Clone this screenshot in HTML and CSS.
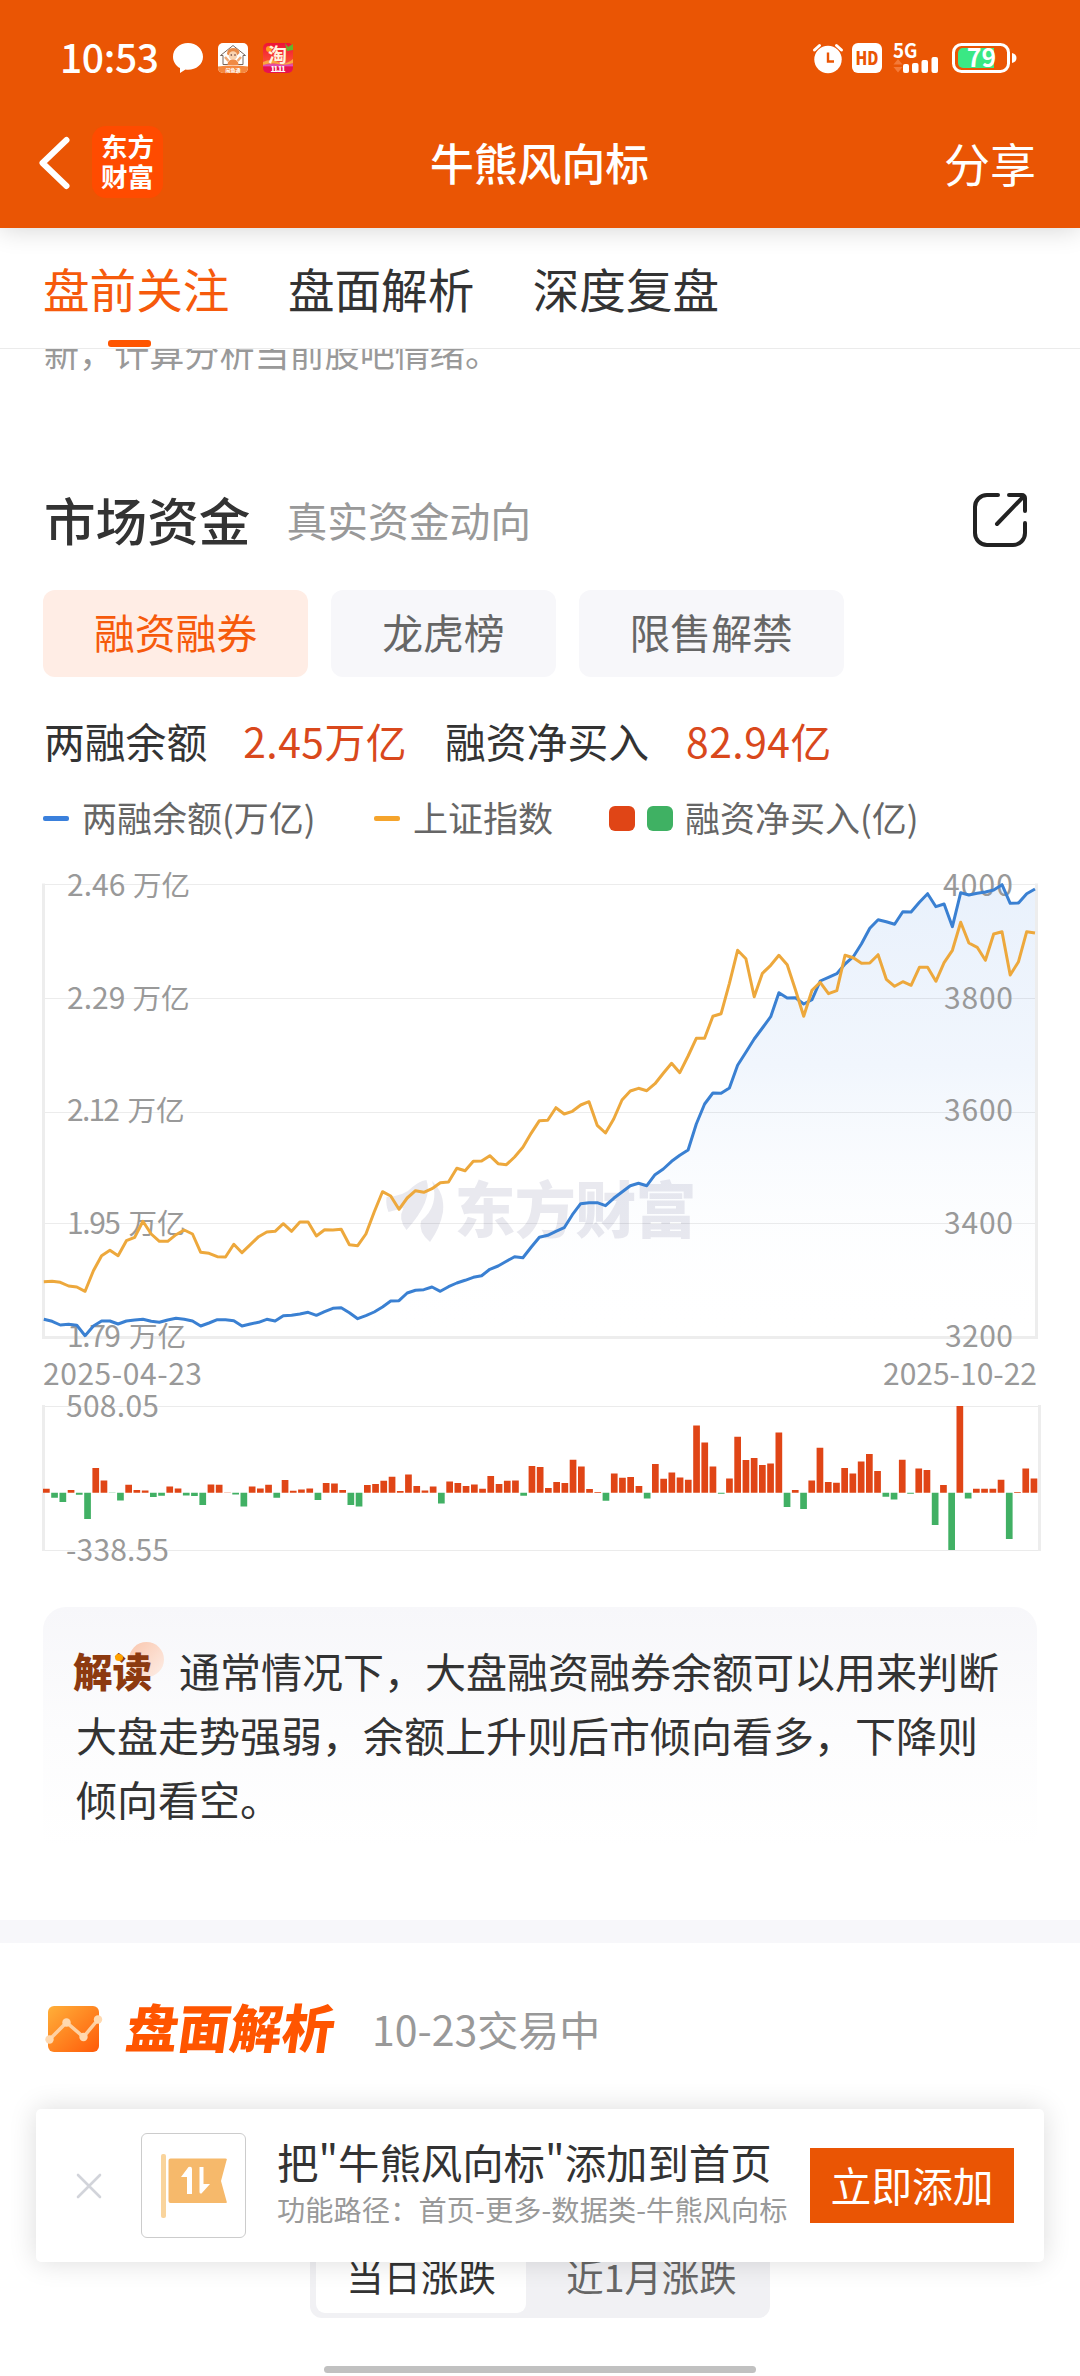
FILE: index.html
```html
<!DOCTYPE html>
<html lang="zh-CN">
<head>
<meta charset="utf-8">
<title>牛熊风向标</title>
<link rel="stylesheet" href="styles.css">
</head>
<body>
<div class="screen">
  <header class="top">
    <div class="status">
      <span class="time">10:53</span>
      <svg class="s-chat" width="30" height="30" viewBox="0 0 30 30"><path d="M15 0C6.700 0 0 6 0 13.700c0 4.800 2.700 9 7 11.400V30l5.500-3.400c.8.100 1.700.2 2.500.2 8.300 0 15-5.600 15-13.100S23.300 0 15 0z" fill="#fff"/></svg>
      <svg class="s-app" width="30" height="30" viewBox="0 0 30 30">
        <rect width="30" height="30" rx="5" fill="#fff"/>
        <path d="M0 23.500q15-2 30 0V25a5 5 0 0 1-5 5H5a5 5 0 0 1-5-5z" fill="#f5873d"/>
        <path d="M2.500 12.500 15 2.500l12.500 10H25v9H5v-9z" fill="none" stroke="#77665c" stroke-width="1"/>
        <path d="M9 11q0-6 6-6t6.500 5l-2 2H10z" fill="#e88a48"/>
        <circle cx="15" cy="12.500" r="4.300" fill="#f9d3b0"/>
        <circle cx="13.300" cy="12" r=".8" fill="#533"/><circle cx="17" cy="12" r=".8" fill="#533"/>
        <path d="M9.500 22q0-5.500 5.500-5.500t5.500 5.500z" fill="#f08a45"/><path d="M7 14l3.500 4M23 14l-3.500 4" stroke="#f0a873" stroke-width="2.500"/>
        <text x="15" y="28.800" text-anchor="middle" font-size="5" font-weight="700" fill="#fff">闲鱼通</text>
      </svg>
      <svg class="s-app" width="30" height="30" viewBox="0 0 30 30">
        <defs><linearGradient id="tb" x1="0" y1="0" x2="0" y2="1"><stop offset="0" stop-color="#ee1238"/><stop offset=".6" stop-color="#fb4a32"/><stop offset=".75" stop-color="#e04fb4"/><stop offset=".8" stop-color="#e8124e"/></linearGradient></defs>
        <rect width="30" height="30" rx="5" fill="url(#tb)"/>
        <path d="M22 0l3 4 5-3v6l-6 1z" fill="#63b52c"/>
        <circle cx="6" cy="6" r="3" fill="#ff9a1f"/>
        <path d="M0 19q8-4 15 0t15-3v4q-8 3-15 1T0 22z" fill="#f9a640"/>
        <text x="14.500" y="18.500" text-anchor="middle" font-size="19" font-weight="700" fill="#fff4df">淘</text>
        <text x="15" y="29" text-anchor="middle" font-size="7.500" font-weight="900" fill="#fff" textLength="15">11.11</text>
      </svg>
      <svg class="s-right" width="204" height="30" viewBox="0 0 204 30">
        <g fill="#fff">
          <circle cx="15" cy="16.500" r="13.700"/>
          <path d="M1.500 7l5-4.500M28.500 7l-5-4.500" stroke="#fff" stroke-width="3" stroke-linecap="round"/>
          <path d="M15 9.500v9h6" fill="none" stroke="#ea5504" stroke-width="2.400"/>
          <rect x="39" y="0" width="30" height="30" rx="6"/>
          <text x="54" y="21.500" text-anchor="middle" font-size="18" font-weight="900" fill="#ea5504" textLength="23" lengthAdjust="spacingAndGlyphs">HD</text>
          <text x="80" y="15" font-size="20" font-weight="700" textLength="24.500" lengthAdjust="spacingAndGlyphs">5G</text>
          <rect x="90" y="21" width="6" height="9" rx="2"/><rect x="99" y="20" width="6.500" height="10" rx="2"/><rect x="108.500" y="17" width="6.500" height="13" rx="2"/><rect x="118.500" y="14" width="6.500" height="16" rx="2"/>
          <path d="M80.500 21.500l4.500-5.500 4.500 5.500zM80.500 24l4.500 5.500 4.500-5.500z" fill="#f47a38"/>
        </g>
        <rect x="140.500" y="1.500" width="55" height="27" rx="8" fill="none" stroke="#fff" stroke-width="3"/>
        <path d="M150 5h31v20h-31a5 5 0 0 1-5-5v-10a5 5 0 0 1 5-5z" fill="#3ae884"/>
        <text x="168.500" y="24" text-anchor="middle" font-size="25" font-weight="700" fill="#fff">79</text>
        <path d="M199 10q4.500 1 4.500 5t-4.500 5z" fill="#fff"/>
      </svg>
    </div>
    <nav class="nav">
      <svg width="32" height="54" viewBox="0 0 32 54"><path d="M28.500 4 4.500 27l24 23" fill="none" stroke="#fff" stroke-width="6" stroke-linecap="round" stroke-linejoin="round"/></svg>
      <div class="logo"><span>东方</span><span>财富</span></div>
      <h1>牛熊风向标</h1>
      <span class="share">分享</span>
    </nav>
  </header>
  <div class="tabs">
    <span class="tab on">盘前关注</span><span class="tab">盘面解析</span><span class="tab">深度复盘</span>
  </div>
  <div class="peek"><p>新，计算分析当前股吧情绪。</p></div>

  <section class="funds">
    <div class="head">
      <h2>市场资金</h2><span class="sub">真实资金动向</span>
      <svg class="open" width="56" height="56" viewBox="0 0 56 56"><g fill="none" stroke="#222" stroke-width="4" stroke-linecap="round" stroke-linejoin="round"><path d="M26 3H15A12 12 0 0 0 3 15v26a12 12 0 0 0 12 12h26a12 12 0 0 0 12-12V31"/><path d="M25 32 51 5M37 3h13a3 3 0 0 1 3 3v13"/></g></svg>
    </div>
    <div class="chips"><span class="chip on">融资融券</span><span class="chip">龙虎榜</span><span class="chip">限售解禁</span></div>
    <div class="stats"><span>两融余额</span><b class="v1">2.45万亿</b><span class="l2">融资净买入</span><b class="v2">82.94亿</b></div>
    <div class="legend">
      <i class="dash blue"></i><span class="g1">两融余额(万亿)</span>
      <i class="dash amber"></i><span class="g2">上证指数</span>
      <i class="sq red"></i><i class="sq green"></i><span>融资净买入(亿)</span>
    </div>
    <svg class="chart" width="1080" height="710" viewBox="0 868 1080 710">
      <defs><linearGradient id="area" gradientUnits="userSpaceOnUse" x1="0" y1="884" x2="0" y2="1337"><stop offset="0" stop-color="#e9f1fc"/><stop offset=".4" stop-color="#f1f6fd"/><stop offset="1" stop-color="#fff" stop-opacity="0"/></linearGradient></defs>
      <path id="areaPath" fill="url(#area)"/>
      <g fill="#33336b" fill-opacity=".11">
        <path d="M386.500 1197q18-1 26-10 7-6 14-7 7 20-20 50-9-11-3-22l-15 4q-3-7-2-15z"/>
        <path d="M432 1181q13 12 11 31-3 16-13 30-12-10-9-21 19-16 11-40z"/>
        <text x="575.500" y="1233" text-anchor="middle" font-size="61" font-weight="900" textLength="242">东方财富</text>
      </g>
      <g stroke="#000" stroke-opacity=".075"><path d="M45 884.500H1035M45 998.500H1035M45 1112.500H1035M45 1223.500H1035"/></g>
      <path d="M43.500 883.500V1337.500H1036.500V883.500" fill="none" stroke="#ededed" stroke-width="3"/>
      <g class="axis">
        <text x="67" y="896">2.46<tspan class="unit" x="133">万亿</tspan></text>
        <text x="67" y="1009">2.29<tspan class="unit" x="132.500">万亿</tspan></text>
        <text x="67" y="1121"><tspan textLength="53">2.12</tspan><tspan class="unit" x="127.500">万亿</tspan></text>
        <text x="67" y="1234"><tspan textLength="54">1.95</tspan><tspan class="unit" x="128.500">万亿</tspan></text>
        <text x="67" y="1347"><tspan textLength="54">1.79</tspan><tspan class="unit" x="129">万亿</tspan></text>
        <g text-anchor="end"><text x="1013" y="896" textLength="70">4000</text><text x="1013" y="1009" textLength="69">3800</text><text x="1013" y="1121" textLength="69">3600</text><text x="1013" y="1234" textLength="69">3400</text><text x="1013" y="1347" textLength="68">3200</text></g>
        <text x="43" y="1385" textLength="159">2025-04-23</text>
        <text x="1037" y="1385" text-anchor="end" textLength="154">2025-10-22</text>
      </g>
      <path id="bluePath" class="line" stroke="#3a80d2"/>
      <path id="amberPath" class="line" stroke="#eda83c"/>
      <path d="M45 1406.500H1038M45 1550.500H1038" stroke="#ebebeb"/>
      <path d="M43.500 1405V1551M1039.500 1405V1551" stroke="#ededed" stroke-width="3"/>
      <g class="axis"><text x="66" y="1417" textLength="93">508.05</text><text x="66" y="1561" textLength="103">-338.55</text></g>
      <path id="upBars" fill="#e04516"/><path id="downBars" fill="#41b064"/>
    </svg>
    <div class="note">
      <p><span class="badge"><span>解读</span><i></i></span>通常情况下，大盘融资融券余额可以用来判断<br>大盘走势强弱，余额上升则后市倾向看多，下降则<br>倾向看空。</p>
    </div>
  </section>
  <section class="analysis">
    <div class="a-head">
      <svg width="58" height="46" viewBox="0 0 58 46"><defs><linearGradient id="ic" x1="0" y1="0" x2="1" y2="1"><stop offset="0" stop-color="#ffb03a"/><stop offset="1" stop-color="#ff5a08"/></linearGradient></defs><rect x="3" width="51" height="46" rx="6" fill="url(#ic)"/><g fill="#ffd9b0"><path d="M4.500 33.500 21.500 16.500 38.500 31 53 13.500" fill="none" stroke="#ffd0a0" stroke-width="3.500"/><circle cx="4.500" cy="33.500" r="4.200"/><circle cx="21.500" cy="16.500" r="4.200"/><circle cx="38.500" cy="31" r="4.200"/><circle cx="53" cy="13.500" r="4.200"/></g></svg>
      <h2>盘面解析</h2><span>10-23交易中</span>
    </div>
    <div class="seg"><span class="on">当日涨跌</span><span>近1月涨跌</span></div>
  </section>

  <aside class="toast">
    <svg class="x" width="26" height="26" viewBox="0 0 26 26"><path d="M2 2l22 22M24 2 2 24" stroke="#d2d4da" stroke-width="2.600" stroke-linecap="round"/></svg>
    <div class="pic"><svg width="68" height="66" viewBox="0 0 68 66"><rect x="1" y="1" width="5" height="64" rx="2" fill="#f9d49c"/><path d="M10.500 5.500h55q2 0 1 2L61 28l5.500 20q1 2-1 2h-55q-2 0-2-2v-40.500q0-2 2-2z" fill="#f6b96b"/><path d="M21 24l7.500-10q3.500-1 3.500 2v25h-5V24zM39.500 14h4v17h6.500l-8.500 9.500q-2 .5-2-1.500z" fill="#fff"/></svg></div>
    <div class="msg"><strong>把"牛熊风向标"添加到首页</strong><small>功能路径：首页-更多-数据类-牛熊风向标</small></div>
    <span class="btn">立即添加</span>
  </aside>
  <div class="home"></div>
</div>
<script src="chart.js"></script>
</body>
</html>
```
FILE: styles.css
```css
* { box-sizing: border-box; margin: 0; padding: 0; }
body { width: 1080px; background: #fff; color: #333; font-family: "Noto Sans CJK SC", sans-serif; font-size: 40.8px; }
h1, h2, strong, b { font-weight: 500; }
.screen { position: relative; width: 1080px; height: 2376px; overflow: hidden; display: flex; flex-direction: column; }
svg { display: block; flex: none; overflow: visible; }
span { white-space: nowrap; }

.top { height: 228px; flex: none; background: #ea5504; color: #fff; position: relative; z-index: 2; box-shadow: 0 2px 24px rgba(0, 0, 0, .16); }
.status { height: 100px; padding: 16px 63px 0 60px; display: flex; align-items: center; }
.time { font-size: 39px; font-weight: 500; line-height: 80px; width: 113px; margin-top: -5px; letter-spacing: -.4px; }
.s-chat { margin-right: 15px; }
.s-app { margin-right: 15px; }
.s-right { margin-left: auto; }
.nav { height: 124px; padding: 0 44px 0 38px; display: flex; align-items: center; }
.nav > svg { margin-top: 2px; }
.logo { width: 71px; height: 72px; margin-left: 22px; border-radius: 14px; background: #ff4b00; display: flex; flex-direction: column; justify-content: center; align-items: center; font-size: 26.5px; font-weight: 700; line-height: 30px; padding-bottom: 3px; }
.nav h1 { flex: 1; text-align: center; padding-right: 28px; font-size: 43.8px; line-height: 60px; margin-top: -1px; }
.share { font-size: 46px; line-height: 60px; margin-top: -1px; }

.tabs { height: 121px; flex: none; display: flex; gap: 58.500px; padding: 0 43px; background: #fff; border-bottom: 1px solid #ebebeb; position: relative; z-index: 1; }
.tab { font-size: 46.6px; line-height: 120px; display: flex; flex-direction: column; align-items: center; }
.tab.on { color: #f65a0c; }
.tab.on::after { content: ""; width: 43px; height: 7px; border-radius: 3px; background: #ff5500; margin-top: -8px; margin-right: 13px; }
.peek { height: 101px; flex: none; overflow: hidden; padding-left: 44px; color: #999; }
.peek p { font-size: 35.1px; line-height: 40px; margin-top: -17px; }

.funds { height: 1470px; flex: none; }
.head { height: 140px; padding: 0 52px 0 44px; display: flex; align-items: center; }
.head h2 { font-size: 51.6px; line-height: 80px; margin-top: -3px; }
.sub { margin-left: 36px; color: #999; margin-top: -1px; }
.open { margin-left: auto; }
.chips { display: flex; gap: 23px; padding: 0 43px; }
.chip { height: 87px; line-height: 84px; padding: 0 51px; border-radius: 12px; background: #f7f7fa; color: #666; }
.chip.on { background: #ffede5; color: #f65a0c; }
.stats { display: flex; padding: 0 44px; height: 132px; line-height: 128px; }
.stats b { font-weight: 400; color: #d9481c; letter-spacing: .5px; }
.v1 { margin-left: 36px; }
.l2 { margin-left: 38px; }
.v2 { margin-left: 37px; }
.legend { display: flex; align-items: center; height: 59px; margin-top: -20px; padding: 0 43px; font-size: 35px; color: #666; margin-bottom: 20px; }
.legend span { line-height: 50px; margin-top: -3px; }
.dash { width: 26px; height: 5px; border-radius: 2px; }
.dash.blue { background: #3a80dc; margin-right: 13px; }
.dash.amber { background: #f5a42c; margin-right: 13px; }
.g1 { width: 292px; }
.g2 { width: 196px; }
.sq { width: 26px; height: 25px; border-radius: 6px; margin-right: 12px; }
.sq.red { background: #e04516; }
.sq.green { background: #3fb163; }
.axis { font-size: 30px; fill: #999; }
.unit { font-size: 28.600px; }
.line { fill: none; stroke-width: 3; stroke-linejoin: round; }
.note { margin: 29px 43px 0; height: 250px; border-radius: 23px; padding: 31px 33px 0; background: linear-gradient(#f7f7fa, #fcfcfd 50%, #fff 96%); }
.note p { font-size: 41px; line-height: 64px; white-space: nowrap; }
.badge { position: relative; display: inline-block; width: 103px; height: 64px; vertical-align: top; color: #8d3a10; font-size: 39.6px; font-weight: 900; }
.badge span { position: relative; z-index: 1; margin-left: -3px; }
.badge::before { content: ""; position: absolute; left: 53px; top: 4px; width: 35px; height: 35px; border-radius: 50%; background: linear-gradient(135deg, #fac6ad, #fdeee7); }
.badge i { position: absolute; z-index: 2; left: 39px; top: 16px; width: 8px; height: 7px; border-radius: 50%; background: #ffa200; }

.analysis { flex: 1; border-top: 23px solid #f7f7fa; }
.a-head { height: 172px; padding-left: 45px; display: flex; align-items: center; color: #999; }
.a-head h2 { font-size: 52px; font-weight: 900; color: #ff5500; transform: skewX(-8deg); margin-left: 24px; line-height: 60px; margin-top: -6px; }
.a-head span { margin-left: 37px; font-size: 41px; margin-top: -2px; }
.seg { margin: 119px auto 0; width: 460px; height: 84px; border-radius: 12px; background: #f1f1f4; padding: 5px 6px; display: flex; color: #666; font-size: 37.4px; line-height: 74px; }
.seg span { flex: 1; text-align: center; padding-left: 13px; }
.seg .on { flex: 0 0 210px; background: #fff; color: #333; border-radius: 9px; padding: 0; }

.toast { position: absolute; z-index: 3; left: 36px; top: 2109px; width: 1008px; height: 153px; border-radius: 5px; background: #fff; box-shadow: 0 0 28px rgba(0, 0, 0, .14); display: flex; align-items: center; padding: 0 30px 0 40px; }
.pic { width: 105px; height: 105px; border: 1px solid #ccc; border-radius: 6px; margin-left: 39px; display: flex; align-items: center; justify-content: center; }
.msg { margin-left: 31px; display: flex; flex-direction: column; white-space: nowrap; }
.msg strong { font-size: 41.4px; font-weight: 400; line-height: 56px; margin-top: -10px; }
.msg small { font-size: 28.2px; line-height: 38px; color: #999; letter-spacing: .1px; margin-top: 1px; }
.btn { margin-left: auto; width: 204px; height: 75px; line-height: 74px; text-align: center; background: #ea5504; color: #fff; }
.home { position: absolute; left: 324px; bottom: 3px; width: 432px; height: 7px; border-radius: 4px; background: #c1c1c1; }
```
FILE: chart.js
```js
// Curve samples: thirds of a pixel below y = 860, one per trading day.
const balance = [1378,1384,1395,1393,1396,1427,1398,1383,1383,1392,1383,1380,1378,1384,1387,1380,1375,1378,1383,1398,
  1389,1379,1379,1382,1398,1392,1387,1378,1383,1367,1366,1362,1357,1366,1355,1345,1343,1358,1376,1367,
  1356,1341,1323,1322,1299,1291,1289,1281,1294,1280,1269,1261,1252,1247,1228,1218,1204,1190,1193,1162,
  1132,1126,1114,1103,1064,1031,1028,1028,1037,1015,996,977,970,977,944,927,904,886,870,792,
  732,699,700,684,616,577,537,504,470,398,414,413,432,419,363,352,341,312,290,251,
  205,179,185,193,155,156,127,101,140,132,200,98,105,100,96,90,74,130,129,101,87];
const index = [1265,1264,1267,1278,1281,1294,1232,1187,1171,1187,1142,1132,1084,1122,1144,1144,1124,1110,1122,1177,
  1180,1190,1191,1153,1178,1154,1130,1116,1114,1091,1114,1086,1086,1128,1109,1110,1108,1154,1157,1122,
  1056,995,1008,1048,1014,992,997,986,968,966,925,932,904,903,887,911,914,891,862,820,
  782,781,743,762,754,735,725,796,819,777,720,693,685,692,671,640,610,638,588,535,
  535,469,461,370,271,296,410,340,316,286,314,390,469,391,367,401,392,286,293,310,
  309,284,358,379,365,376,322,322,364,308,271,187,249,262,301,222,215,345,305,215,219];
// Net buying per day, thirds of a pixel from the zero line.
const net = [12,-15,-28,8,-6,-79,74,37,-1,-23,24,8,7,-13,-9,19,13,-8,-10,-37,
  25,24,1,-5,-41,19,13,24,-15,38,6,10,13,-22,29,28,8,-37,-41,23,
  26,36,48,5,55,20,7,19,-32,34,29,20,25,12,50,26,36,37,-9,80,
  77,14,32,29,99,79,11,2,-24,58,45,47,20,-17,86,42,61,46,39,202,
  151,79,-3,43,168,98,104,83,88,181,-43,8,-49,37,135,32,30,74,58,94,
  116,65,-12,-20,99,-3,73,68,-97,23,-172,260,-17,12,12,12,39,-139,2,73,43];

const trace = a => 'M' + a.map((v, i) => (43.8 + i * 8.26).toFixed(1) + ' ' + (860 + v / 3).toFixed(1)).join('L');
const set = (id, d) => document.getElementById(id).setAttribute('d', d);
set('bluePath', trace(balance));
set('amberPath', trace(index));
set('areaPath', trace(balance) + 'V1336H43.8Z');

const bars = keep => net.map((v, i) => keep(v)
  ? `M${(43 + i * 8.23).toFixed(1)} 1492.7h6.7v${(-v / 3).toFixed(1)}h-6.7z` : '').join('');
set('upBars', bars(v => v > 0));
set('downBars', bars(v => v < 0));
```
